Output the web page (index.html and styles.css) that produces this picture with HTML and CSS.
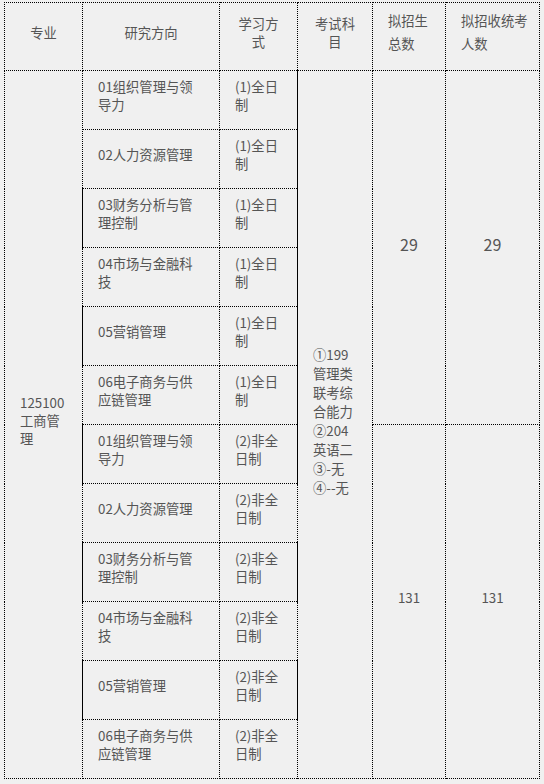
FILE: index.html
```html
<!DOCTYPE html>
<html lang="zh-CN">
<head>
<meta charset="utf-8">
<link rel="stylesheet" href="styles.css">
</head>
<body>
<div class="wrap">
<table class="plan">
  <colgroup>
    <col class="c1"><col class="c2"><col class="c3"><col class="c4"><col class="c5"><col class="c6">
  </colgroup>
  <thead>
    <tr class="head">
      <th class="ctr">专业</th>
      <th class="ctr">研究方向</th>
      <th class="ctr">学习方<br>式</th>
      <th class="ctr">考试科<br>目</th>
      <th class="tall">拟招生<br>总数</th>
      <th class="tall">拟招收统考<br>人数</th>
    </tr>
  </thead>
  <tbody>
    <tr>
      <td rowspan="12" class="major">125100<br>工商管<br>理</td>
      <td>01组织管理与领导力</td>
      <td class="sr">(1)全日制</td>
      <td rowspan="12" class="exam">①199<br>管理类<br>联考综<br>合能力<br>②204<br>英语二<br>③-无<br>④--无</td>
      <td rowspan="6" class="num big">29</td>
      <td rowspan="6" class="num big">29</td>
    </tr>
    <tr><td>02人力资源管理</td><td class="sr">(1)全日制</td></tr>
    <tr><td class="sl">03财务分析与管理控制</td><td class="sr">(1)全日制</td></tr>
    <tr><td>04市场与金融科技</td><td class="sr">(1)全日制</td></tr>
    <tr><td class="sl">05营销管理</td><td class="sr">(1)全日制</td></tr>
    <tr><td>06电子商务与供应链管理</td><td class="sr">(1)全日制</td></tr>
    <tr>
      <td class="sl">01组织管理与领导力</td>
      <td class="sr">(2)非全日制</td>
      <td rowspan="6" class="num">131</td>
      <td rowspan="6" class="num">131</td>
    </tr>
    <tr><td>02人力资源管理</td><td>(2)非全日制</td></tr>
    <tr><td class="sl">03财务分析与管理控制</td><td class="sr">(2)非全日制</td></tr>
    <tr><td>04市场与金融科技</td><td>(2)非全日制</td></tr>
    <tr><td class="sl">05营销管理</td><td class="sr">(2)非全日制</td></tr>
    <tr><td>06电子商务与供应链管理</td><td>(2)非全日制</td></tr>
  </tbody>
</table>
</div>
</body>
</html>
```

FILE: styles.css
```css
html, body {
  margin: 0;
  padding: 0;
  background: #f0f0f0;
}
.wrap {
  padding: 2px 0 0 4px;
}
.plan {
  border-collapse: collapse;
  table-layout: fixed;
  width: 535px;
  font-family: "Noto Sans CJK SC", "Microsoft YaHei", sans-serif;
  font-size: 13.3px;
  color: #555;
  background: #f0f0f0;
}
.c1 { width: 78px; }
.c2 { width: 137px; }
.c3 { width: 78px; }
.c4 { width: 75px; }
.c5 { width: 73px; }
.c6 { width: 94px; }

.plan th,
.plan td {
  border: 1px dotted #000;
  padding: 7px 15px 15px 15px;
  vertical-align: middle;
  text-align: left;
  font-weight: normal;
  line-height: 18px;
  height: 36px;
  word-break: break-all;
}
.plan .head th {
  height: 45px;
}
.plan th.ctr {
  text-align: center;
  padding-left: 4px;
  padding-right: 4px;
}
.plan th.tall {
  line-height: 22.5px;
  padding-right: 2px;
  white-space: nowrap;
}
.plan td.major {
  white-space: nowrap;
  padding-right: 4px;
}
.plan td.sl { border-left: 1px solid #000; }
.plan td.sr { border-right: 1px solid #000; }
.plan td.exam {
  line-height: 19px;
}
.plan td.num {
  text-align: center;
  padding-left: 4px;
  padding-right: 4px;
}
.plan td.big {
  font-size: 16px;
}
```
